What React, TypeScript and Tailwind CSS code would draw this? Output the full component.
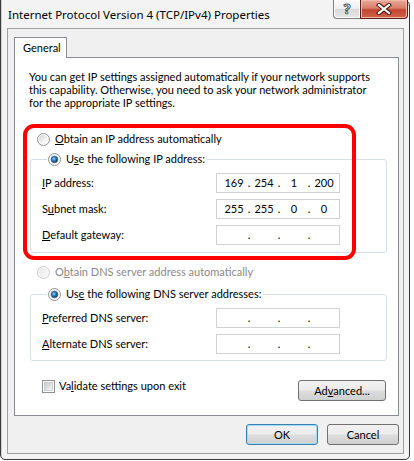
import React, { Fragment } from 'react';

// Win7 "Internet Protocol Version 4" properties dialog

const Defs = () => (
  <svg width="0" height="0" className="absolute">
    <defs>
      <linearGradient id="rbFill" x1="0" y1="0" x2="1" y2="1">
        <stop offset="0" stopColor="#cfcfcf" />
        <stop offset="0.6" stopColor="#f2f2f2" />
        <stop offset="1" stopColor="#ffffff" />
      </linearGradient>
      <linearGradient id="rbFillOff" x1="0" y1="0" x2="1" y2="1">
        <stop offset="0" stopColor="#e6e6e6" />
        <stop offset="1" stopColor="#fafafa" />
      </linearGradient>
      <radialGradient id="rbDot" cx="0.4" cy="0.4" r="0.6">
        <stop offset="0" stopColor="#9fe0ff" />
        <stop offset="0.45" stopColor="#2b86c8" />
        <stop offset="1" stopColor="#173d66" />
      </radialGradient>
      <linearGradient id="cbFill" x1="0" y1="0" x2="1" y2="1">
        <stop offset="0" stopColor="#c9cbce" />
        <stop offset="1" stopColor="#f4f4f4" />
      </linearGradient>
    </defs>
  </svg>
);

const Radio = ({ checked = false, disabled = false }: { checked?: boolean; disabled?: boolean }) => (
  <svg width="13" height="13" viewBox="0 0 13 13" className="shrink-0">
    <circle cx="6.5" cy="6.5" r="6" fill="#fff" stroke={disabled ? '#c9c9c9' : '#8e8f8f'} />
    <circle cx="6.5" cy="6.5" r="4.6" fill={disabled ? 'url(#rbFillOff)' : 'url(#rbFill)'} />
    {checked && <circle cx="6.5" cy="6.5" r="3.3" fill="url(#rbDot)" stroke="#1b3f63" strokeWidth="0.5" />}
  </svg>
);

const Checkbox = () => (
  <svg width="13" height="13" viewBox="0 0 13 13" className="shrink-0">
    <rect x="0.5" y="0.5" width="12" height="12" fill="#fff" stroke="#8e8f8f" />
    <rect x="2.5" y="2.5" width="8" height="8" fill="url(#cbFill)" stroke="#b3b6ba" strokeWidth="0.6" />
  </svg>
);

const IpBox = ({ parts }: { parts: string[] }) => (
  <div className="flex h-[20px] w-[124px] shrink-0 items-center border border-[#cfd1d5] bg-white pl-[4px] leading-[16px]">
    {parts.map((p, i) => (
      <Fragment key={i}>
        {i > 0 && <span className="w-[4px] text-center">.</span>}
        <span className="w-[26px] text-center">{p}</span>
      </Fragment>
    ))}
  </div>
);

const Row = ({ label, parts }: { label: React.ReactNode; parts: string[] }) => (
  <div className="flex h-[20px] items-center">
    <span className="w-[174px] shrink-0 leading-[16px]">{label}</span>
    <IpBox parts={parts} />
  </div>
);

const btn =
  'flex h-[21px] items-center justify-center rounded-[3px] border text-black leading-[16px] bg-[linear-gradient(#f2f2f2_0%,#ebebeb_48%,#dddddd_52%,#cfcfcf_100%)]';

export default function App() {
  return (
    <div className="relative h-[461px] w-[414px] overflow-hidden bg-white font-['Lato',sans-serif] text-[11px] text-black">
      <Defs />
      <div className="mt-[-1px] flex h-[461px] w-[410px] flex-col rounded-tr-[7px] rounded-b-[5px] border border-[#3a3a3a] bg-[#f3f3f3] shadow-[inset_1px_0_0_#cfcfcf]">
        {/* title bar */}
        <div className="flex h-[28px] shrink-0 justify-between pl-[7px] pr-[1px]">
          <span className="mt-[7px] font-['Noto_Sans',sans-serif] text-[11.5px] leading-[16px]">
            Internet Protocol Version 4 (TCP/IPv4) Properties
          </span>
          <div className="flex h-[19px]">
            <div className="flex w-[27px] items-center justify-center rounded-bl-[4px] border border-t-0 border-r-0 border-[#7d7d7d] bg-[linear-gradient(#fbfbfb_0%,#ececec_50%,#dadada_52%,#e6e6e6_100%)] shadow-[inset_0_0_0_1px_#ffffff]">
              <span className="font-['Noto_Sans',sans-serif] text-[14px] font-bold leading-[16px] text-white [-webkit-text-stroke:1px_#555]">?</span>
            </div>
            <div className="flex w-[48px] items-center justify-center rounded-br-[4px] border border-t-0 border-[#5b1e16] bg-[linear-gradient(#e9a99b_0%,#d97d68_45%,#c1452f_55%,#d0654c_100%)] shadow-[inset_0_0_0_1px_#f0b7a8]">
              <svg width="16" height="12" viewBox="0 0 16 12">
                <path d="M3 2 L13 10 M13 2 L3 10" stroke="#4a1a12" strokeWidth="4.2" strokeLinecap="square" />
                <path d="M3 2 L13 10 M13 2 L3 10" stroke="#ffffff" strokeWidth="2.2" strokeLinecap="square" />
              </svg>
            </div>
          </div>
        </div>

        {/* client area */}
        <div className="ml-[6px] mr-[5px] flex h-[426px] flex-col border border-[#a0a0a0] bg-[#f0f0f0] pl-[6px] pr-[4px] pt-[8px]">
          <div className="relative z-10 flex h-[21px] w-[53px] items-center border border-b-0 border-[#898c95] bg-white pl-[8px] pb-[1px] leading-[16px]">
            General
          </div>
          <div className="mt-[-1px] flex h-[359px] flex-col border border-[#898c95] bg-white pl-[15px] pr-[11px] pt-[12px]">
            <p className="ml-[-1px] w-[346px] leading-[13px]">
              You can get IP settings assigned automatically if your network supports this capability. Otherwise, you need to ask your network administrator for the appropriate IP settings.
            </p>

            <div className="ml-[7px] mt-[22px] flex h-[16px] items-center gap-[5px] leading-[16px]">
              <Radio />
              <span>
                <u>O</u>btain an IP address automatically
              </span>
            </div>

            <fieldset className="mt-[4px] rounded-[3px] border border-[#d5dfe5] pb-[7px] pl-[11px] pt-[6px]">
              <legend className="ml-[5px] flex h-[16px] items-center gap-[5px] px-[1px] leading-[16px]">
                <Radio checked />
                <span className="pr-[1px]">
                  U<u>s</u>e the following IP address:
                </span>
              </legend>
              <div className="flex flex-col gap-[6px]">
                <Row label={<><u>I</u>P address:</>} parts={['169', '254', '1', '200']} />
                <Row label={<>S<u>u</u>bnet mask:</>} parts={['255', '255', '0', '0']} />
                <Row label={<><u>D</u>efault gateway:</>} parts={['', '', '', '']} />
              </div>
            </fieldset>

            <div className="ml-[7px] mt-[11px] flex h-[16px] items-center gap-[5px] leading-[16px] text-[#8a8a8a]">
              <Radio disabled />
              <span>
                O<u>b</u>tain DNS server address automatically
              </span>
            </div>

            <fieldset className="mt-[6px] rounded-[3px] border border-[#d5dfe5] pb-[6px] pl-[11px] pt-[6px]">
              <legend className="ml-[5px] flex h-[16px] items-center gap-[5px] px-[1px] leading-[16px]">
                <Radio checked />
                <span className="pr-[1px]">
                  Us<u>e</u> the following DNS server addresses:
                </span>
              </legend>
              <div className="flex flex-col gap-[6px]">
                <Row label={<><u>P</u>referred DNS server:</>} parts={['', '', '', '']} />
                <Row label={<><u>A</u>lternate DNS server:</>} parts={['', '', '', '']} />
              </div>
            </fieldset>

            <div className="mt-[19px] flex h-[21px] items-start justify-between">
              <div className="ml-[12px] mt-[-2px] flex h-[16px] items-center gap-[4px] leading-[16px]">
                <Checkbox />
                <span>
                  Va<u>l</u>idate settings upon exit
                </span>
              </div>
              <button className={`${btn} mr-[1px] w-[88px] border-[#707070]`}>
                Ad<u>v</u>anced...
              </button>
            </div>
          </div>

          <div className="mt-[8px] flex justify-end gap-[9px]">
            <button className={`${btn} w-[72px] border-[#3c7fb1] shadow-[inset_0_0_0_1px_#9fdcf7]`}>OK</button>
            <button className={`${btn} w-[72px] border-[#707070]`}>Cancel</button>
          </div>
        </div>
      </div>

      {/* red annotation box */}
      <div className="pointer-events-none absolute left-[23px] top-[124px] h-[136px] w-[333px] rounded-[11px] border-[4px] border-[#ff0000]" />
    </div>
  );
}
